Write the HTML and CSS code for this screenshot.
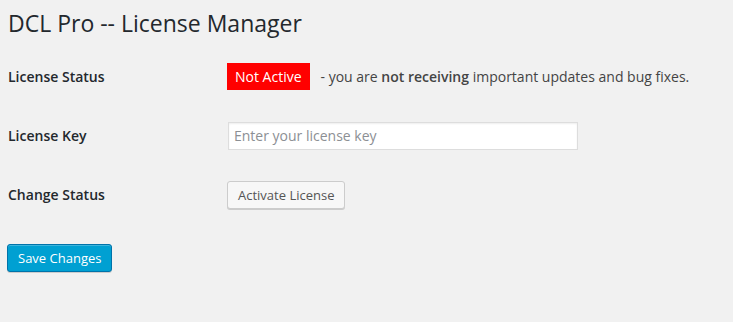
FILE: index.html
```html
<!DOCTYPE html>
<html lang="en">
<head>
  <meta charset="UTF-8" />
  <title>DCL Pro -- License Manager</title>
  <link rel="stylesheet" href="styles.css">
</head>
<body>

  <div class="wrap">
    <h1>DCL Pro -- License Manager</h1>

    <form class="license-form" onsubmit="event.preventDefault();">
      <div class="form-row">
        <label class="row-label">License Status</label>
        <div class="row-field">
          <span class="status-badge">Not Active</span>
          <span class="status-desc">- you are <strong>not receiving</strong> important updates and bug fixes.</span>
        </div>
      </div>

      <div class="form-row">
        <label class="row-label" for="licenseKey">License Key</label>
        <div class="row-field">
          <input type="text" id="licenseKey" class="regular-text" placeholder="Enter your license key">
        </div>
      </div>

      <div class="form-row">
        <label class="row-label">Change Status</label>
        <div class="row-field">
          <button type="button" class="button">Activate License</button>
        </div>
      </div>

      <p class="submit">
        <button type="submit" class="button button-primary">Save Changes</button>
      </p>
    </form>
  </div>

</body>
</html>
```

FILE: styles.css
```css
  * {
    box-sizing: border-box;
    margin: 0;
    padding: 0;
  }

  body {
    font-family: 'Open Sans', sans-serif;
    font-size: 14px;
    background: #f1f1f1;
    color: #444;
    min-height: 100vh;
  }

  .wrap {
    padding: 0 8px;
  }

  h1 {
    font-size: 23px;
    font-weight: 400;
    line-height: 29px;
    padding: 9px 0 4px;
    color: #23282d;
    height: 47px;
  }

  .form-row {
    display: flex;
    align-items: center;
    height: 59px;
  }

  .row-label {
    width: 220px;
    flex-shrink: 0;
    font-weight: 600;
    color: #23282d;
  }

  .row-field {
    display: flex;
    align-items: center;
  }

  .status-badge {
    display: inline-block;
    background: #f00;
    color: #fff;
    font-size: 14px;
    line-height: 27px;
    padding: 0 8px;
    margin-left: -1px;
  }

  .status-desc {
    margin-left: 11px;
  }

  .status-desc strong {
    font-weight: 600;
  }

  .regular-text {
    width: 350px;
    height: 28px;
    padding: 3px 5px;
    font-family: inherit;
    font-size: 14px;
    color: #32373c;
    background: #fff;
    border: 1px solid #ddd;
    box-shadow: inset 0 1px 2px rgba(0, 0, 0, 0.07);
    outline: none;
  }

  .regular-text::placeholder {
    color: #8c8f94;
  }

  .button {
    height: 28px;
    line-height: 26px;
    padding: 0 10px 1px;
    font-family: inherit;
    font-size: 13px;
    color: #555;
    background: #f7f7f7;
    border: 1px solid #ccc;
    border-radius: 3px;
    box-shadow: 0 1px 0 #ccc;
    cursor: pointer;
    margin-left: -1px;
  }

  .button-primary {
    background: #00a0d2;
    border-color: #0073aa;
    color: #fff;
    box-shadow: inset 0 1px 0 rgba(120, 200, 230, 0.5), 0 1px 0 rgba(0, 0, 0, 0.15);
  }

  .submit {
    margin-top: 20px;
  }
```
